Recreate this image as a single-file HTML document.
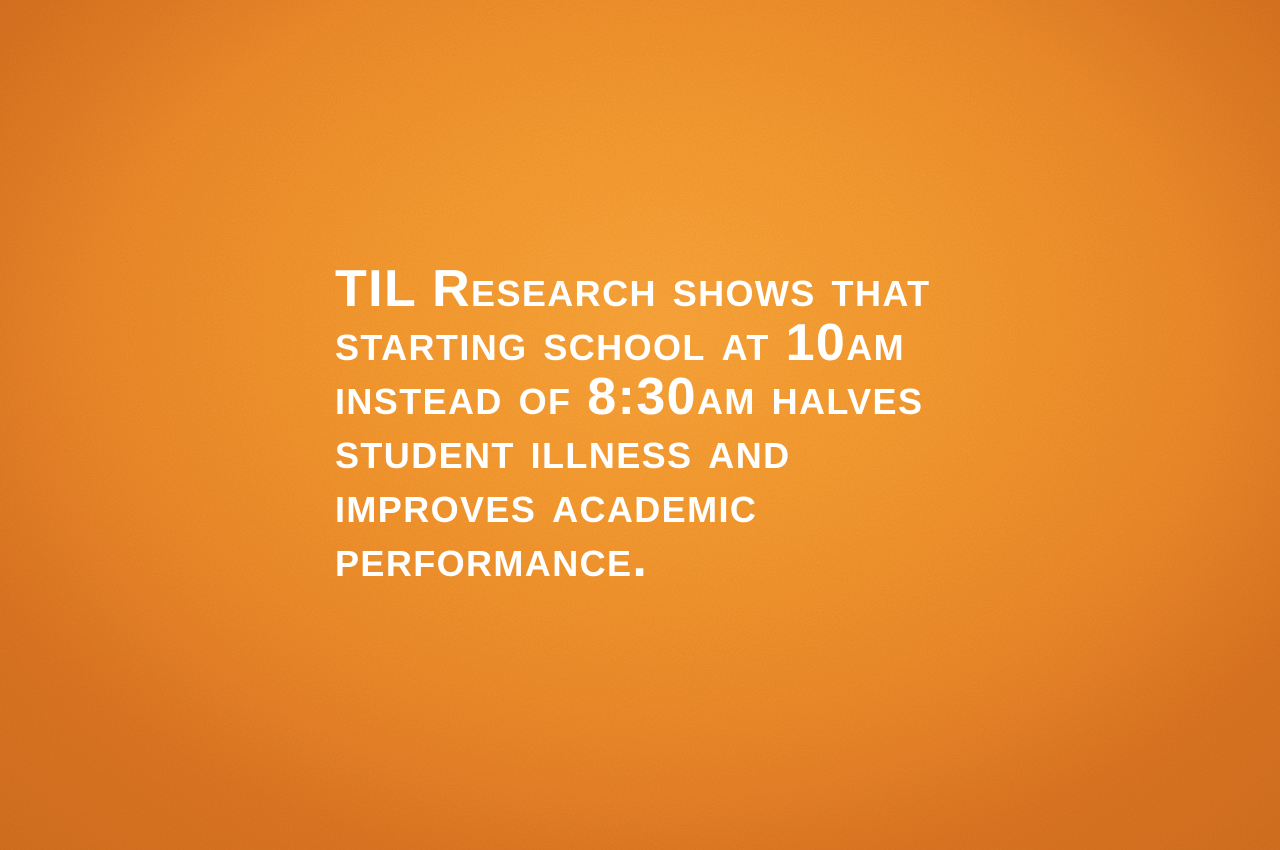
<!DOCTYPE html>
<html><head><meta charset="utf-8"><style>
html,body{margin:0;padding:0;width:1280px;height:850px;overflow:hidden}
body{position:relative;background:radial-gradient(ellipse 760px 560px at 660px 320px,#f6a43a 0%,#f29a30 35%,#e98a2a 70%,#dd7824 100%);}
.vig{position:absolute;inset:0;background:radial-gradient(ellipse 950px 700px at 640px 380px,rgba(0,0,0,0) 60%,rgba(120,50,0,0.15) 100%)}
svg.n{position:absolute;left:0;top:0;opacity:0.3;mix-blend-mode:multiply}
.t{position:absolute;left:335px;top:262px;color:#fff;font-family:"Liberation Sans",sans-serif;font-weight:bold;font-size:52px;font-variant:small-caps;line-height:54px;letter-spacing:1.4px;white-space:pre}
.t span{display:block}
</style></head><body>
<svg class="n" width="1280" height="850"><filter id="f"><feTurbulence type="fractalNoise" baseFrequency="0.6" numOctaves="2" seed="3"/><feColorMatrix values="0 0 0 0 0.8  0 0 0 0 0.5  0 0 0 0 0.2  0 0 0 1.2 -0.3"/></filter><rect width="1280" height="850" filter="url(#f)"/></svg>
<div class="vig"></div>
<div class="t"><span>TIL Research shows that</span><span>starting school at 10am</span><span>instead of 8:30am halves</span><span>student illness and</span><span>improves academic</span><span>performance.</span></div>
</body></html>
